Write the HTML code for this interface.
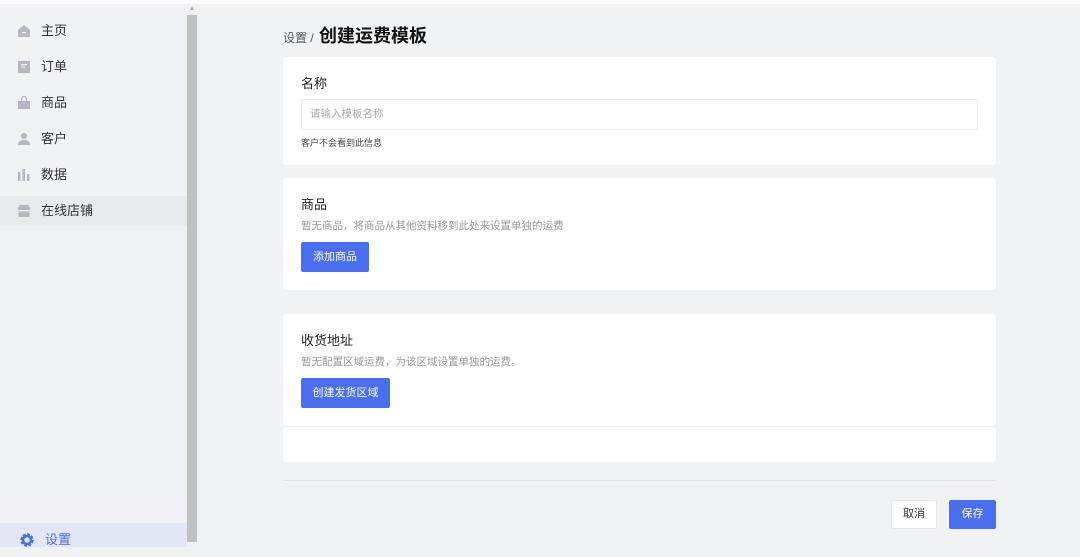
<!DOCTYPE html><html><head><meta charset="utf-8"><style>
*{margin:0;padding:0;box-sizing:border-box}
body{width:1080px;height:547px;overflow:hidden;background:#f1f2f4;font-family:"Liberation Sans","Noto Sans CJK SC",sans-serif;position:relative;color:#222}
.top{position:absolute;left:0;top:0;width:1080px;height:4px;background:#fff}
.side{position:absolute;left:0;top:4px;width:187px;height:543px;background:#f1f2f5}
.it{position:absolute;left:0;width:187px;height:30px;font-size:13px;color:#333;line-height:30px}
.it span{position:absolute;left:41px}
.ic{position:absolute;left:17px;top:8px;width:14px;height:14px}
.sb{position:absolute;left:187px;top:4px;width:11px;height:543px;background:#f1f1f1}
.thumb{position:absolute;left:187px;top:15px;width:10px;height:527px;background:#c1c1c1}
.card{position:absolute;left:283px;width:713px;background:#fff;border-radius:3px}
.h{position:absolute;left:18px;font-size:13px;color:#222}
.g{position:absolute;left:18px;font-size:10.5px;color:#999}
.btn{position:absolute;background:#4a6ef0;color:#fff;font-size:11px;text-align:center;border-radius:2px}
</style></head><body>
<div class="top"></div>
<div class="side">
<div class="it" style="top:12px"><svg class="ic" viewBox="0 0 14 14"><path d="M1 6L7 1L13 6V13H1Z" fill="#b3b8c3"/><rect x="5" y="8" width="4" height="1.2" fill="#f1f2f5"/></svg><span>主页</span></div>
<div class="it" style="top:48px"><svg class="ic" viewBox="0 0 14 14"><rect x="1" y="1" width="12" height="12" rx="1" fill="#b3b8c3"/><rect x="4" y="4" width="6" height="1.2" fill="#f1f2f5"/><rect x="4" y="6.5" width="4" height="1.2" fill="#f1f2f5"/></svg><span>订单</span></div>
<div class="it" style="top:84px"><svg class="ic" viewBox="0 0 14 14"><path d="M1 5H13V13H1Z" fill="#b3b8c3"/><path d="M4.5 5V3A2.5 2.5 0 0 1 9.5 3V5" stroke="#b3b8c3" fill="none" stroke-width="1.3"/></svg><span>商品</span></div>
<div class="it" style="top:120px"><svg class="ic" viewBox="0 0 14 14"><circle cx="7" cy="4" r="3" fill="#b3b8c3"/><path d="M1 13C1 9 4 8 7 8S13 9 13 13Z" fill="#b3b8c3"/></svg><span>客户</span></div>
<div class="it" style="top:156px"><svg class="ic" viewBox="0 0 14 14"><rect x="1" y="4" width="2.5" height="9" fill="#b3b8c3"/><rect x="5.5" y="1" width="2.5" height="12" fill="#b3b8c3"/><rect x="10" y="6" width="2.5" height="7" fill="#b3b8c3"/></svg><span>数据</span></div>
<div class="it" style="top:192px;background:#e9eaee"><svg class="ic" viewBox="0 0 14 14"><path d="M1 4L2.5 1H11.5L13 4V6H1Z" fill="#b3b8c3"/><rect x="1.5" y="7.5" width="11" height="5.5" fill="#b3b8c3"/></svg><span>在线店铺</span></div>
<div class="it" style="top:519px;background:#e3e7f5;height:24px;line-height:34px;color:#4a6ef0"><svg class="ic" style="left:20px;top:10px" viewBox="0 0 14 14"><circle cx="7" cy="7" r="5" fill="none" stroke="#4a6ef0" stroke-width="3.4" stroke-dasharray="2.6 1.3"/><circle cx="7" cy="7" r="4" fill="none" stroke="#4a6ef0" stroke-width="2.5"/></svg><span style="left:45px">设置</span></div>
</div>
<div class="sb"></div><div class="thumb"></div>
<div style="position:absolute;left:189px;top:6px;font-size:6px;color:#999">▲</div>
<div style="position:absolute;left:283px;top:23px;font-size:12px;color:#555;line-height:26px">设置 / <b style="font-size:18px;color:#111;margin-left:2px">创建运费模板</b></div>
<div class="card" style="top:57px;height:108px">
<div class="h" style="top:16px">名称</div>
<div style="position:absolute;left:18px;top:42px;width:677px;height:31px;border:1px solid #eceef1;border-radius:2px;font-size:10.5px;color:#aaa;line-height:29px;padding-left:8px">请输入模板名称</div>
<div style="position:absolute;left:18px;top:79px;font-size:9px;color:#444">客户不会看到此信息</div>
</div>
<div class="card" style="top:178px;height:112px">
<div class="h" style="top:16px">商品</div>
<div class="g" style="top:40px">暂无商品，将商品从其他资料移到此处来设置单独的运费</div>
<div class="btn" style="left:18px;top:64px;width:68px;height:30px;line-height:30px">添加商品</div>
</div>
<div class="card" style="top:314px;height:112px">
<div class="h" style="top:16px">收货地址</div>
<div class="g" style="top:40px">暂无配置区域运费，为该区域设置单独的运费。</div>
<div class="btn" style="left:18px;top:64px;width:89px;height:30px;line-height:30px">创建发货区域</div>
</div>
<div class="card" style="top:427px;height:35px"></div>
<div style="position:absolute;left:283px;top:480px;width:713px;height:1px;background:#e2e4e8"></div>
<div style="position:absolute;left:891px;top:500px;width:46px;height:29px;background:#fff;border:1px solid #e6e8eb;border-radius:2px;font-size:11px;text-align:center;line-height:27px;color:#333">取消</div>
<div class="btn" style="left:949px;top:500px;width:47px;height:29px;line-height:29px">保存</div>
</body></html>
